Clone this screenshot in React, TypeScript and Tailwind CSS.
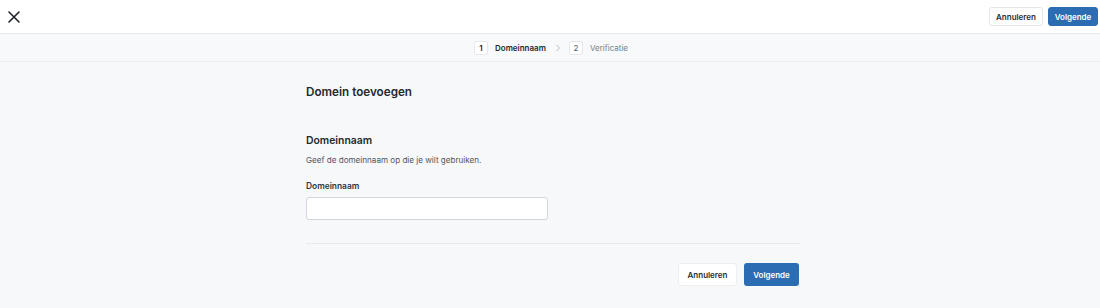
import React from "react";

export default function App() {
  return (
    <div className="w-[1100px] h-[308px] overflow-hidden bg-[#f7f8fa] text-[#1f2329]" style={{ fontFamily: "Inter, 'Noto Sans', sans-serif" }}>
      <div className="h-[34px] bg-white border-b border-[#e6e8eb] flex items-center justify-between pl-[8px] pr-[2px]">
        <svg width="12" height="12" viewBox="0 0 12 12">
          <path d="M1 1 L11 11 M11 1 L1 11" stroke="#1f2329" strokeWidth="1.6" strokeLinecap="round" />
        </svg>
        <div className="flex items-center gap-[5px]">
          <button className="h-[19px] w-[54px] bg-white border border-[#e3e5e8] rounded-[3px] text-[8px] font-semibold text-[#2a2e33]">Annuleren</button>
          <button className="h-[19px] w-[50px] bg-[#2b6cb3] border border-[#2b6cb3] rounded-[3px] text-[8px] font-semibold text-white">Volgende</button>
        </div>
      </div>
      <div className="h-[28px] bg-[#f8f9fb] border-b border-[#eceef0] flex items-center justify-center">
        <div className="flex items-center ml-[2px]">
          <span className="w-[14px] h-[14px] bg-white border border-[#e6e8eb] rounded-[2px] flex items-center justify-center text-[8px] font-semibold">1</span>
          <span className="ml-[7px] text-[8px] font-semibold text-[#25292e]">Domeinnaam</span>
          <svg width="6" height="8" viewBox="0 0 6 8" className="ml-[9px]">
            <path d="M1.5 1 L4.5 4 L1.5 7" stroke="#b8bcc2" strokeWidth="1" fill="none" />
          </svg>
          <span className="ml-[8px] w-[14px] h-[14px] bg-white border border-[#e6e8eb] rounded-[2px] flex items-center justify-center text-[8px] text-[#555a60]">2</span>
          <span className="ml-[7px] text-[8px] text-[#7a7f86]">Verificatie</span>
        </div>
      </div>
      <div className="w-[494px] ml-[306px]">
        <h1 className="mt-[22px] text-[11.7px] font-semibold leading-[16px] text-[#24282d]">Domein toevoegen</h1>
        <h2 className="mt-[34px] text-[10.4px] font-semibold leading-[14px] text-[#24282d]">Domeinnaam</h2>
        <p className="mt-[6px] text-[8.1px] leading-[12px] text-[#50555c]">Geef de domeinnaam op die je wilt gebruiken.</p>
        <label className="block mt-[15px] text-[8.4px] font-semibold leading-[11px] text-[#30343a]">Domeinnaam</label>
        <input className="block mt-[5px] w-[242px] h-[23px] bg-white border border-[#d3d6da] rounded-[3px] outline-none" />
        <div className="mt-[23px] h-px bg-[#e8eaed]" />
        <div className="mt-[19px] flex justify-end gap-[7px] pr-[1px]">
          <button className="h-[23px] w-[59px] bg-white border border-[#eceef0] rounded-[3px] text-[8px] font-semibold text-[#2a2e33]">Annuleren</button>
          <button className="h-[23px] w-[55px] bg-[#2b6cb3] rounded-[3px] text-[8px] font-semibold text-white">Volgende</button>
        </div>
      </div>
    </div>
  );
}
